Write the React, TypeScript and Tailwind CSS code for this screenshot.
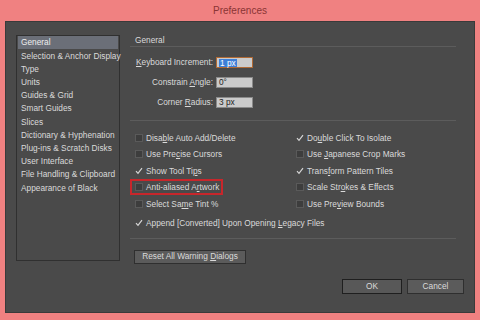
import type { ReactNode } from "react";

const sections = [
  "General",
  "Selection & Anchor Display",
  "Type",
  "Units",
  "Guides & Grid",
  "Smart Guides",
  "Slices",
  "Dictionary & Hyphenation",
  "Plug-ins & Scratch Disks",
  "User Interface",
  "File Handling & Clipboard",
  "Appearance of Black",
];

function U({ children }: { children: ReactNode }) {
  return <span className="underline underline-offset-[1px]">{children}</span>;
}

function Check({ checked, children, marked }: { checked?: boolean; children: ReactNode; marked?: boolean }) {
  return (
    <div className="relative flex items-center h-[16.5px]">
      {checked ? (
        <svg width="8" height="8" viewBox="0 0 8 8" className="shrink-0">
          <path d="M1 4.2 L3 6.4 L7 1.2" fill="none" stroke="#d6d6d6" strokeWidth="1.2" />
        </svg>
      ) : (
        <div className="w-[8px] h-[8px] shrink-0 bg-[#3d3d3d] border border-[#5a5a5a]" />
      )}
      <span className="ml-[3px] whitespace-nowrap">{children}</span>
      {marked && (
        <div className="absolute left-[-5px] top-[0px] w-[93px] h-[16px] border-2 border-[#c8262b]" />
      )}
    </div>
  );
}

function Field({ label, value, focused }: { label: ReactNode; value: string; focused?: boolean }) {
  return (
    <div className="flex items-center h-[11px]">
      <div className="w-[86px] text-right pr-[3px] whitespace-nowrap">{label}</div>
      <div
        className={
          "w-[37px] h-[11px] flex items-center px-[2px] text-[#222] bg-[#cbcbcb] border " +
          (focused ? "border-[#b06a35]" : "border-[#8a8a8a]")
        }
      >
        {focused ? <span className="bg-[#3d7fd8] text-white leading-[8px] px-[1px]">{value}</span> : value}
      </div>
    </div>
  );
}

export default function App() {
  return (
    <div
      className="w-[480px] h-[320px] bg-[#f08181] flex flex-col text-[8.3px] text-[#dadada] leading-none"
      style={{ fontFamily: '"Liberation Sans", Arial, sans-serif' }}
    >
      <div className="h-[21px] flex items-center justify-center text-[10px] text-[#8a3434]">Preferences</div>
      <div className="mx-[5px] mb-[7px] flex-1 bg-[#4a4a4a] border border-[#3a3a3a] flex flex-col">
        <div className="flex pl-[10px] pt-[13px]">
          <div className="w-[104px] h-[226px] border border-[#303030] px-[1px]">
            {sections.map((s, i) => (
              <div
                key={s}
                className={"h-[13.2px] flex items-center pl-[3px] whitespace-nowrap " + (i === 0 ? "bg-[#6b6f78] text-[#eee]" : "")}
              >
                {s}
              </div>
            ))}
          </div>
          <div className="ml-[10px] w-[326px] flex flex-col">
            <div className="h-[11px] flex items-center pl-[5px] border-b border-[#5c5c5c] box-content">General</div>
            <div className="mt-[10px] flex flex-col gap-[9px]">
              <Field label={<><U>K</U>eyboard Increment:</>} value="1 px" focused />
              <Field label={<>Constrain <U>A</U>ngle:</>} value="0°" />
              <Field label={<>Corner <U>R</U>adius:</>} value="3 px" />
            </div>
            <div className="mt-[12px] border-t border-[#5c5c5c]" />
            <div className="mt-[8.5px] pl-[5px] grid grid-cols-[161px_1fr]">
              <div className="flex flex-col">
                <Check>Disa<U>b</U>le Auto Add/Delete</Check>
                <Check>Use Pre<U>c</U>ise Cursors</Check>
                <Check checked>Show Tool Ti<U>p</U>s</Check>
                <Check marked>Anti-aliased A<U>r</U>twork</Check>
                <Check>Select Sa<U>m</U>e Tint %</Check>
              </div>
              <div className="flex flex-col">
                <Check checked>Do<U>u</U>ble Click To Isolate</Check>
                <Check>Use <U>J</U>apanese Crop Marks</Check>
                <Check checked>Trans<U>f</U>orm Pattern Tiles</Check>
                <Check>Scale Str<U>o</U>kes &amp; Effects</Check>
                <Check>Use Pre<U>v</U>iew Bounds</Check>
              </div>
            </div>
            <div className="mt-[3px] pl-[5px]">
              <Check checked>Append [Converted] Upon Opening <U>L</U>egacy Files</Check>
            </div>
            <div className="mt-[6px] border-t border-[#5c5c5c]" />
            <button className="mt-[11px] ml-[4px] w-[112px] h-[14px] bg-[#5b5b5b] border border-[#2f2f2f] text-[#dadada] text-[8.3px] leading-none">
              Reset All Warning <U>D</U>ialogs
            </button>
          </div>
        </div>
        <div className="mt-auto pb-[18px] pr-[10px] flex justify-end gap-[5px]">
          <button className="w-[60px] h-[15px] bg-[#585858] border border-[#1f1f1f] text-[#dadada] text-[8.3px] leading-none">OK</button>
          <button className="w-[57px] h-[15px] bg-[#5b5b5b] border border-[#2f2f2f] text-[#dadada] text-[8.3px] leading-none">Cancel</button>
        </div>
      </div>
    </div>
  );
}
